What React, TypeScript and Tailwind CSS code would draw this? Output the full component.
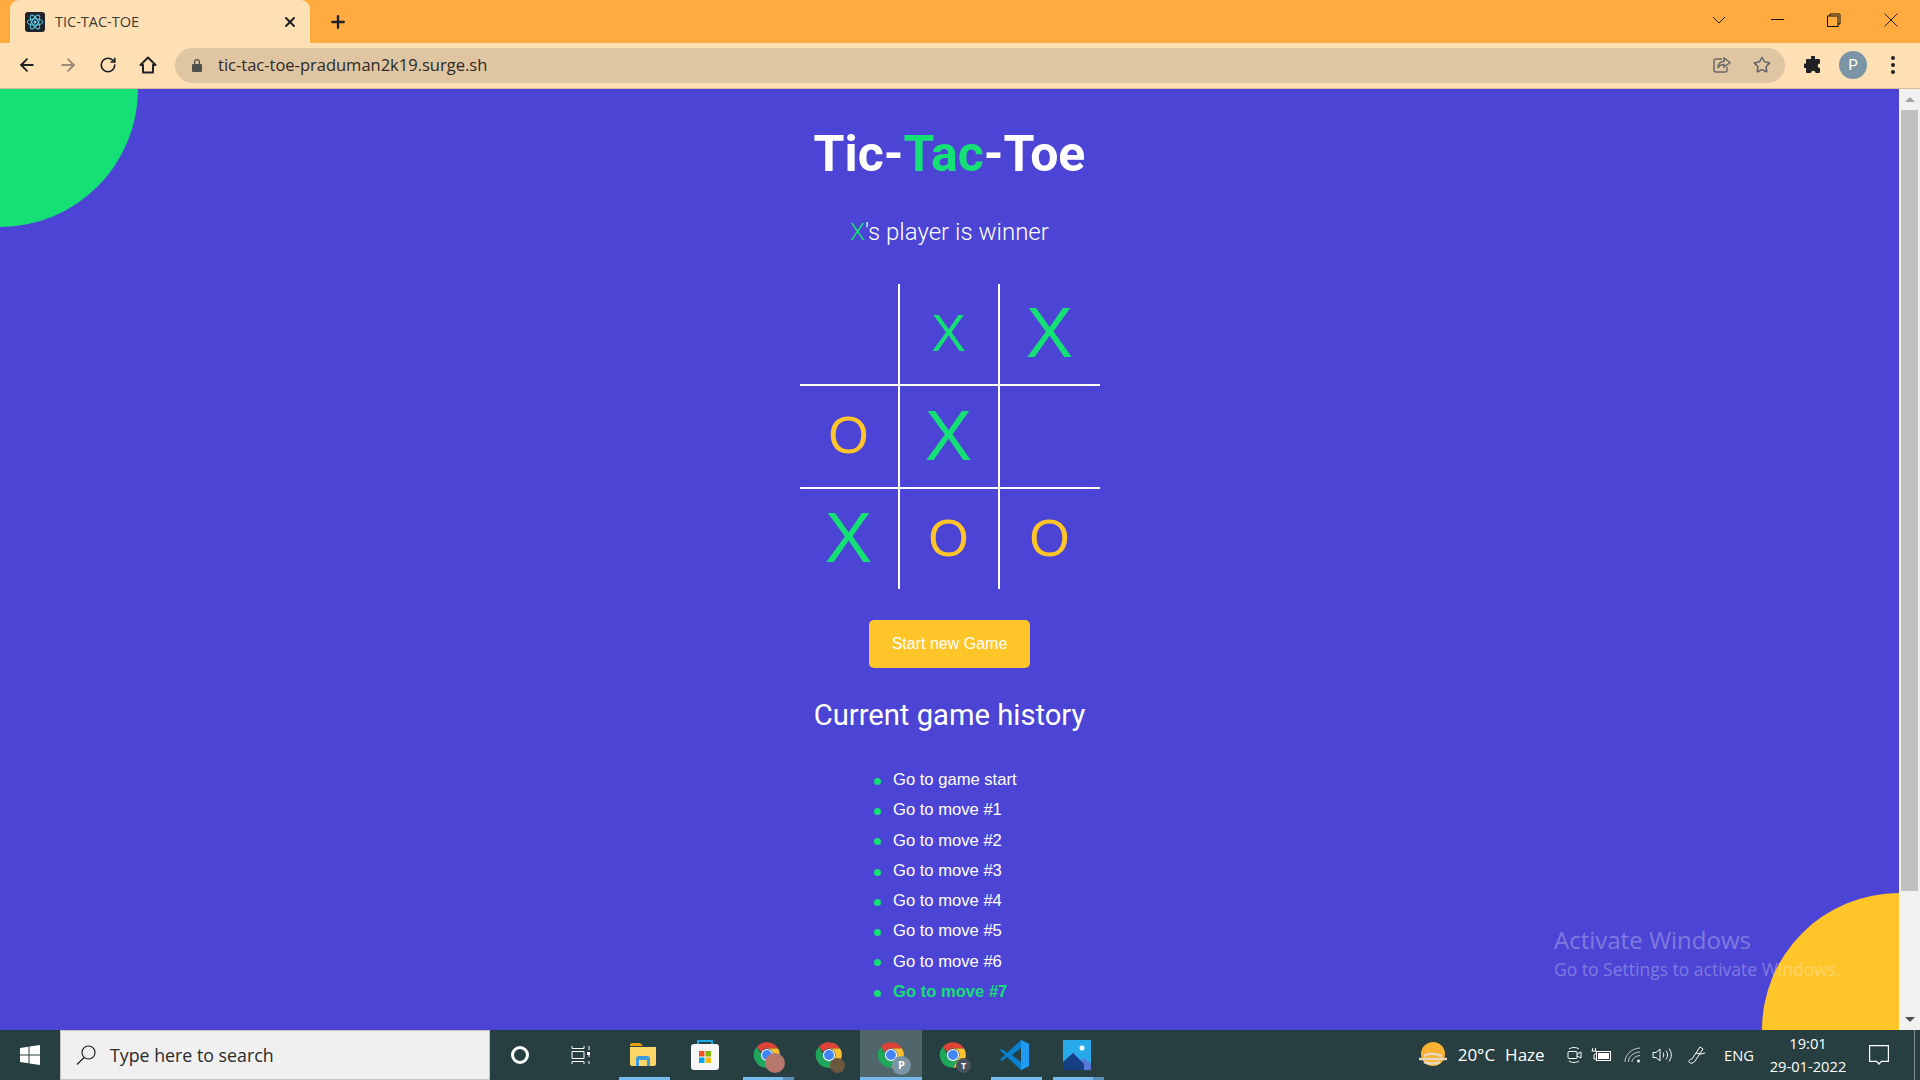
import React from 'react';
import { ArrowLeft, ArrowRight, RotateCw, Star, Plus, X as CloseIcon } from 'lucide-react';

const moves = ['Go to game start', 'Go to move #1', 'Go to move #2', 'Go to move #3', 'Go to move #4', 'Go to move #5', 'Go to move #6'];

// big marks have just been played or belong to the winning line
const board = [
  [null, { mark: 'X', big: false }, { mark: 'X', big: true }],
  [{ mark: 'O', big: false }, { mark: 'X', big: true }, null],
  [{ mark: 'X', big: true }, { mark: 'O', big: false }, { mark: 'O', big: false }],
];

const rowHeights = ['h-[102px]', 'h-[103px]', 'h-[100px]'];

const ReactIcon = () => (
  <div className="flex h-5 w-5 items-center justify-center rounded-[3px] bg-[#20232a]">
    <svg viewBox="-12 -12 24 24" className="h-[18px] w-[18px]" fill="none" stroke="#61dafb" strokeWidth="1.2">
      <circle r="2" fill="#61dafb" stroke="none" />
      <ellipse rx="10.5" ry="4.2" />
      <ellipse rx="10.5" ry="4.2" transform="rotate(60)" />
      <ellipse rx="10.5" ry="4.2" transform="rotate(120)" />
    </svg>
  </div>
);

const ChromeLogo = () => (
  <svg viewBox="0 0 48 48" className="h-7 w-7">
    <path d="M24 2a22 22 0 0 1 19.05 11H24a11 11 0 0 0-9.9 6.2L6.6 9.8A22 22 0 0 1 24 2z" fill="#db4437" />
    <path d="M43.05 13A22 22 0 0 1 24 46l9.5-16.5A11 11 0 0 0 33.5 18 11 11 0 0 0 24 13z" fill="#fbc02d" />
    <path d="M24 46A22 22 0 0 1 6.6 9.8l9.5 16.5A11 11 0 0 0 33.5 29.5z" fill="#1fa65a" />
    <circle cx="24" cy="24" r="10.5" fill="#fff" />
    <circle cx="24" cy="24" r="8.5" fill="#4285f4" />
  </svg>
);

const ChromeApp = ({ badge }: { badge: React.ReactNode }) => (
  <div className="relative h-7 w-7">
    <ChromeLogo />
    {badge}
  </div>
);

const FolderIcon = () => (
  <svg viewBox="0 0 28 26" className="h-[26px] w-7">
    <path d="M1 3a2 2 0 0 1 2-2h8l3 3H1z" fill="#e3a008" />
    <path d="M1 5h26v17a2 2 0 0 1-2 2H3a2 2 0 0 1-2-2z" fill="#fcd666" />
    <path d="M7 24v-7a3 3 0 0 1 3-3h8a3 3 0 0 1 3 3v7h-3v-6h-8v6z" fill="#3f9be0" />
  </svg>
);

const StoreIcon = () => (
  <svg viewBox="0 0 30 32" className="h-8 w-[30px]">
    <path d="M8 8V2h14v6" fill="none" stroke="#1ba7e8" strokeWidth="2" />
    <rect x="1" y="5" width="28" height="26" rx="3" fill="#f6f6f6" />
    <rect x="9" y="12" width="5.5" height="5.5" fill="#f25022" />
    <rect x="15.5" y="12" width="5.5" height="5.5" fill="#7fba00" />
    <rect x="9" y="18.5" width="5.5" height="5.5" fill="#00a4ef" />
    <rect x="15.5" y="18.5" width="5.5" height="5.5" fill="#ffb900" />
  </svg>
);

const VSCodeIcon = () => (
  <svg viewBox="0 0 30 32" className="h-8 w-[30px]">
    <path d="M21 1l8 4v22l-8 4-14-13L2 22 0 20.500 5 16 0 11.500 2 10l5 4z" fill="#0a7fcd" />
    <path d="M21 1l8 4v22l-8 4z" fill="#1f9cf0" />
    <path d="M21 9l-9 7 9 7z" fill="#283f41" />
  </svg>
);

const PhotosIcon = () => (
  <svg viewBox="0 0 28 30" className="h-[30px] w-7">
    <rect width="28" height="30" fill="#27a9ea" />
    <circle cx="19" cy="8" r="2.500" fill="#fff" />
    <path d="M0 24l10-11 8 8 3-3 7 6v6H0z" fill="#5a78d8" />
    <path d="M0 22l10-9 11 11v6H0z" fill="#173f86" />
  </svg>
);

const TrayIcons = () => (
  <>
    <svg viewBox="0 0 16 18" className="mr-[8.500px] h-[18px] w-4" fill="none" stroke="#fff" strokeWidth="1">
      <path d="M2 3c3-2 7-2 10 0M2 15c3 2 7 2 10 0" />
      <rect x="1" y="5.500" width="9" height="7" rx="1" />
      <path d="M10 8l4-2v6l-4-2" />
    </svg>
    <svg viewBox="0 0 20 14" className="mr-[13px] h-3.5 w-5">
      <path d="M1.500 0v3M4.500 0v3M0.500 3h5v2L3 7v4h2" fill="none" stroke="#fff" />
      <rect x="5.500" y="3.500" width="14" height="9" fill="none" stroke="#fff" />
      <rect x="7" y="5" width="11" height="6" fill="#fff" />
    </svg>
    <svg viewBox="0 0 18 16" className="mr-2.5 h-4 w-[18px]" fill="none" stroke="#fff" strokeWidth="1">
      <path d="M1 15C1 8 7 1.500 16 1M4.500 15c0-5 4-9.500 11.500-10M8 15c0-3 3-6 8-6.500" opacity="0.7" />
      <circle cx="14.500" cy="14" r="1.500" fill="#fff" stroke="none" />
    </svg>
    <svg viewBox="0 0 20 16" className="mr-[15px] h-4 w-5" fill="none" stroke="#fff" strokeWidth="1">
      <path d="M1 5.500h3L8 2v12l-4-3.500H1z" />
      <path d="M11 5.500c1 1.500 1 3.500 0 5M14 3.500c2 3 2 6 0 9M17 1.500c3 4 3 9 0 13" />
    </svg>
    <svg viewBox="0 0 20 20" className="mr-[17px] h-5 w-5" fill="none" stroke="#fff" strokeWidth="1">
      <path d="M13 2l3 2-8 12c-1 2-5 3-6 1-1-1.500 2-3 3-3zM9 8l5 1 4-1" />
    </svg>
  </>
);

export default function App() {
  return (
    <div className="flex h-screen w-full flex-col overflow-hidden font-['Roboto',sans-serif]">
      {/* Tab strip */}
      <div className="flex h-[43px] shrink-0 items-end bg-[#ffab40] pl-2.5 text-[#202124]">
        <div className="flex h-[43px] w-[300px] items-center rounded-t-[9px] bg-[#ffe0b5] pl-[15px] pr-3">
          <ReactIcon />
          <span className="ml-2.5 font-['Open_Sans',sans-serif] text-[14.500px] text-[#3c3a36]">TIC-TAC-TOE</span>
          <CloseIcon className="ml-auto h-4 w-4" strokeWidth={3} />
        </div>
        <div className="ml-[18px] flex h-[43px] items-center">
          <Plus className="h-5 w-5" strokeWidth={2.800} />
        </div>
        <div className="ml-auto flex h-[43px] items-center pb-1">
          <svg viewBox="0 0 14 8" className="mr-[45px] h-2 w-3.5" fill="none" stroke="#202124"><path d="M1 1l6 6 6-6" /></svg>
          <div className="mr-[43px] h-px w-[13px] bg-[#111]" />
          <svg viewBox="0 0 14 14" className="mr-[43px] h-3.5 w-3.5" fill="none" stroke="#111"><path d="M3 3V1h10v10h-2" /><rect x="0.500" y="3" width="10.500" height="10.500" /></svg>
          <svg viewBox="0 0 14 14" className="mr-[22px] h-3.5 w-3.5" fill="none" stroke="#222"><path d="M0.500 0.500l13 13M13.500 0.500l-13 13" /></svg>
        </div>
      </div>

      {/* Toolbar */}
      <div className="flex h-[46px] shrink-0 items-center border-b border-[#d8bd98] bg-[#ffe0b5] pb-[1px] text-[#202124]">
        <div className="flex w-[175px] shrink-0 items-center pl-[17px]">
          <ArrowLeft className="mr-[21px] h-5 w-5" strokeWidth={2.200} />
          <ArrowRight className="mr-[21px] h-5 w-5 text-[#9b8b78]" strokeWidth={2.200} />
          <RotateCw className="mr-[21px] h-[18px] w-[18px]" strokeWidth={2.200} />
          <svg viewBox="0 0 20 20" className="h-5 w-5" fill="none" stroke="#202124" strokeWidth="2"><path d="M2.500 10L10 2.500 17.500 10H15v7.500H5V10z" strokeLinejoin="round" /></svg>
        </div>
        <div className="flex h-[35px] w-[1610px] shrink-0 items-center rounded-full bg-[#dfc5a1] pl-4">
          <svg viewBox="0 0 12 14" className="h-3.5 w-3" fill="#50504f"><path d="M3 6V4a3 3 0 0 1 6 0v2h1a1 1 0 0 1 1 1v6a1 1 0 0 1-1 1H2a1 1 0 0 1-1-1V7a1 1 0 0 1 1-1zm1.300 0h3.400V4a1.700 1.700 0 0 0-3.400 0z" /></svg>
          <span className="ml-[15px] font-['Open_Sans',sans-serif] text-[16.500px] text-[#2b2a28]">tic-tac-toe-praduman2k19.surge.sh</span>
          <svg viewBox="0 0 18 16" className="ml-auto h-4 w-[18px]" fill="none" stroke="#6a6a68" strokeWidth="1.500"><path d="M9 2H3a2 2 0 0 0-2 2v9a2 2 0 0 0 2 2h9a2 2 0 0 0 2-2v-3" /><path d="M11 1l6 4.500-6 4.500V7.500C8 7.500 6 9 5 11c0-4 2-6.500 6-6.800z" /></svg>
          <Star className="ml-[22px] mr-[14px] h-[18px] w-[18px] text-[#5f6368]" strokeWidth={2} />
        </div>
        <svg viewBox="0 0 18 18" className="ml-[19px] h-[18px] w-[18px]" fill="#202124"><path d="M7 1a2 2 0 0 1 4 0.500V3h4a1 1 0 0 1 1 1v3.500h-.500a2.300 2.300 0 0 0 0 4.500h.500V16a1 1 0 0 1-1 1h-3.500v-.500a2.300 2.300 0 0 0-4.500 0v.500H3a1 1 0 0 1-1-1v-4H.500a2.500 2.500 0 0 1 0-4.500H2V4a1 1 0 0 1 1-1h4z" /></svg>
        <div className="ml-[17px] flex h-7 w-7 items-center justify-center rounded-full bg-[#7b95a6] text-[15px] text-white">P</div>
        <div className="ml-6 flex flex-col gap-[3.500px]">
          <div className="h-[3.500px] w-[3.500px] rounded-full bg-[#202124]" />
          <div className="h-[3.500px] w-[3.500px] rounded-full bg-[#202124]" />
          <div className="h-[3.500px] w-[3.500px] rounded-full bg-[#202124]" />
        </div>
      </div>

      {/* Page viewport */}
      <div className="flex min-h-0 flex-1">
        <main className="relative flex flex-1 flex-col items-center overflow-hidden bg-[#4c44d4] text-white">
          <div className="absolute left-[-138px] top-[-138px] h-[276px] w-[276px] rounded-full bg-[#14e076]" />
          <div className="absolute bottom-[-137px] right-[-137px] h-[274px] w-[274px] rounded-full bg-[#ffc529]" />

          <h1 className="relative mt-[37px] text-[50px] font-bold leading-[56px]">
            Tic-<span className="text-[#14e076]">Tac</span>-Toe
          </h1>
          <p className="relative mt-[34px] text-[24px] font-light leading-8">
            <span className="text-[#14e076]">X</span>'s player is winner
          </p>

          <div className="relative mt-9 grid w-[300px] grid-cols-3 font-['Liberation_Sans',sans-serif]">
            {board.map((row, r) =>
              row.map((cell, c) => (
                <div
                  key={`${r}-${c}`}
                  className={`flex items-center justify-center pb-[3px] leading-none ${rowHeights[r]} ${c < 2 ? 'border-r-2 border-r-white' : ''} ${r < 2 ? 'border-b-2 border-b-white' : ''} ${cell?.mark === 'O' ? 'text-[#ffc529]' : 'text-[#14e076]'} ${cell?.big ? 'text-[71px]' : 'text-[52px]'}`}
                >
                  {cell?.mark}
                </div>
              ))
            )}
          </div>

          <button className="relative mt-[31px] flex h-12 w-[161px] items-center justify-center rounded-[5px] bg-[#ffc529] font-['Liberation_Sans',sans-serif] text-[16px] text-white">
            Start new Game
          </button>

          <h2 className="relative mt-[29px] text-[29.200px] leading-9">Current game history</h2>

          <ul className="relative mt-8 flex w-[161px] flex-col pl-[5px] font-['Liberation_Sans',sans-serif] text-[16.600px] leading-[30.300px]">
            {moves.map((m) => (
              <li key={m} className="flex items-center gap-3">
                <span className="mt-[2px] h-[7px] w-[7px] rounded-full bg-[#14e076]" />
                {m}
              </li>
            ))}
            <li className="flex items-center gap-3 font-bold text-[#14e076]">
              <span className="mt-[2px] h-[7px] w-[7px] rounded-full bg-[#14e076]" />
              Go to move #7
            </li>
          </ul>

          {/* Watermark */}
          <div className="absolute left-[1554px] top-[835px] whitespace-nowrap font-['Open_Sans',sans-serif] text-[#ffffff]/30">
            <div className="text-[24px] leading-[32px]">Activate Windows</div>
            <div className="text-[17.500px] leading-[26px]">Go to Settings to activate Windows.</div>
          </div>
        </main>

        {/* Scrollbar */}
        <div className="flex w-[21px] shrink-0 flex-col items-center bg-[#f1f1f1] pt-[8px]">
          <div className="h-0 w-0 border-x-[5px] border-b-[5px] border-x-transparent border-b-[#a3a3a3]" />
          <div className="mt-2 h-[781px] w-[17px] bg-[#c1c1c1]" />
          <div className="mt-auto mb-2 h-0 w-0 border-x-[5px] border-t-[5px] border-x-transparent border-t-[#505050]" />
        </div>
      </div>

      {/* Taskbar */}
      <div className="flex h-[50px] shrink-0 items-center bg-[#283f41] font-['Open_Sans',sans-serif] text-white">
        <div className="flex h-full w-[60px] shrink-0 items-center justify-center">
          <svg viewBox="0 0 20 20" className="h-5 w-5" fill="#fff">
            <path d="M0 3l8.500-1.200v7.700H0zM9.500 1.600L20 0v9.500H9.500zM0 10.500h8.500v7.700L0 17zM9.500 10.500H20V20L9.500 18.400z" />
          </svg>
        </div>
        <div className="flex h-full w-[430px] shrink-0 items-center border border-[#c4c4c4] bg-[#f0f0f0] pl-[15px] text-[#2b2b2b]">
          <svg viewBox="0 0 20 20" className="h-5 w-5" fill="none" stroke="#222" strokeWidth="1.200">
            <circle cx="12.500" cy="7.500" r="6.500" />
            <path d="M8 12.500L1 19.500" />
          </svg>
          <span className="ml-[14px] text-[17.800px]">Type here to search</span>
        </div>
        <div className="flex h-full w-[60px] shrink-0 items-center justify-center">
          <div className="h-[18px] w-[18px] rounded-full border-[3px] border-white" />
        </div>
        <div className="flex h-full w-[62px] shrink-0 items-center justify-center">
          <svg viewBox="0 0 20 20" className="h-5 w-5" fill="none" stroke="#fff" strokeWidth="1">
            <path d="M1 1v2.500h12V1M1 6.500h12v7H1zM1 19v-2.500h12V19M18 1v4M18 16v3M18 9v3" />
            <rect x="16" y="7" width="3" height="3" fill="#fff" stroke="none" />
          </svg>
        </div>

        <AppSlot underline="full"><FolderIcon /></AppSlot>
        <AppSlot><StoreIcon /></AppSlot>
        <AppSlot underline="stack">
          <ChromeApp badge={<div className="absolute -bottom-1 -right-1 h-5 w-5 rounded-full bg-[#b5786b]" />} />
        </AppSlot>
        <AppSlot>
          <ChromeApp badge={<div className="absolute -bottom-1 -right-0.5 h-[15px] w-[15px] rounded-full bg-[#6b5640]" />} />
        </AppSlot>
        <AppSlot underline="full" active>
          <ChromeApp badge={<div className="absolute -bottom-1.5 -right-1.5 flex h-[19px] w-[19px] items-center justify-center rounded-full bg-[#7b95a6] text-[11px] font-bold">P</div>} />
        </AppSlot>
        <AppSlot>
          <ChromeApp badge={<div className="absolute -bottom-1 -right-1 flex h-[15px] w-[15px] items-center justify-center rounded-full bg-[#47535e] text-[9px] font-bold">T</div>} />
        </AppSlot>
        <AppSlot underline="full"><VSCodeIcon /></AppSlot>
        <AppSlot underline="stack"><PhotosIcon /></AppSlot>

        {/* Tray */}
        <div className="ml-auto flex h-full items-center">
          <svg viewBox="0 0 30 26" className="mr-[10px] h-[26px] w-[30px]">
            <circle cx="15" cy="12" r="12" fill="#f9b233" />
            <path d="M1 17h28M6 14c4-3 10-3 18 0M6 20c5 2 11 2 16 0" stroke="#e7d8bd" strokeWidth="2.500" fill="none" />
          </svg>
          <span className="mr-2.5 text-[17px]">20°C</span>
          <span className="mr-[22px] text-[17px]">Haze</span>
          <TrayIcons />
          <span className="mr-[14px] text-[14.700px]">ENG</span>
          <div className="flex w-[80px] flex-col items-center text-[14.700px] leading-[23px]">
            <span>19:01</span>
            <span>29-01-2022</span>
          </div>
          <svg viewBox="0 0 20 20" className="ml-[21px] h-5 w-5" fill="none" stroke="#fff" strokeWidth="1.200">
            <path d="M0.600 0.600h18.800v15.800h-7l-2.400 2.600-2.400-2.600h-7z" />
          </svg>
          <div className="ml-[25px] mr-[5px] h-full w-px bg-[#7d8c8d]" />
        </div>
      </div>
    </div>
  );
}

function AppSlot({ children, underline, active }: { children: React.ReactNode; underline?: 'full' | 'stack'; active?: boolean }) {
  return (
    <div className={`relative flex h-full w-[62px] shrink-0 items-center justify-center ${active ? 'bg-[#50666a]' : ''}`}>
      {children}
      {underline === 'full' && <div className={`absolute bottom-0 h-[3px] bg-[#76b9ed] ${active ? 'inset-x-0' : 'left-[7px] right-1'}`} />}
      {underline === 'stack' && (
        <div className="absolute bottom-0 left-[7px] right-1 flex h-[3px]">
          <div className="flex-1 bg-[#76b9ed]" />
          <div className="w-[11px] bg-[#5b8fb8]" />
        </div>
      )}
    </div>
  );
}
